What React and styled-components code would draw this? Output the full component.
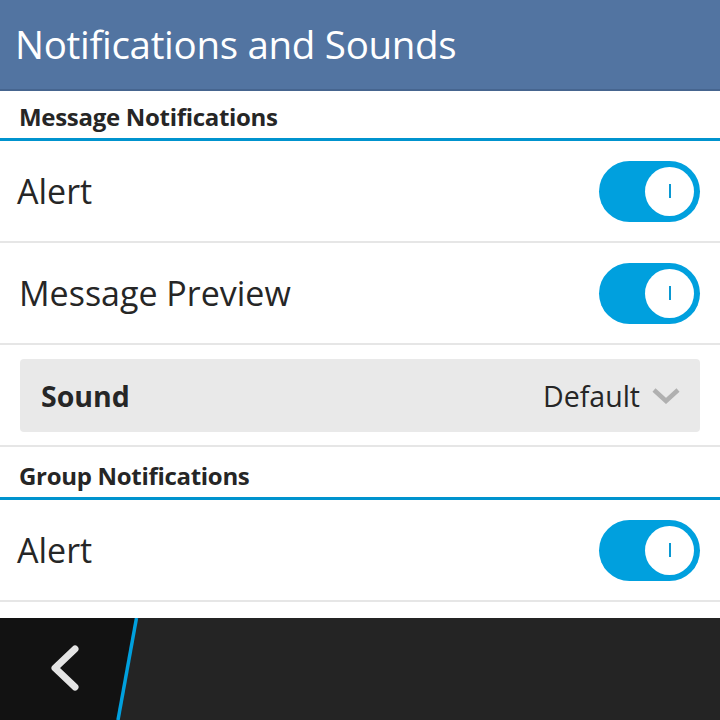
import React from "react";
import styled, { createGlobalStyle } from "styled-components";

const Global = createGlobalStyle`
  html, body { margin: 0; padding: 0; background: #fff; }
  body { width: 720px; height: 720px; overflow: hidden; font-family: "Open Sans", "Noto Sans", sans-serif; }
`;

const Screen = styled.div`
  width: 720px;
  height: 720px;
  display: flex;
  flex-direction: column;
  background: #fff;
  color: #262626;
`;

const Header = styled.header`
  height: 91px;
  flex: none;
  box-sizing: border-box;
  background: #5274a1;
  border-bottom: 2px solid #46658f;
  display: flex;
  align-items: center;
  padding-left: 15px;
`;

const Title = styled.h1`
  margin: 0;
  font-weight: 400;
  font-size: 38.5px;
  color: #fff;
  letter-spacing: -0.3px;
  padding-bottom: 1px;
`;

const Content = styled.main`
  flex: 1;
  display: flex;
  flex-direction: column;
`;

const SectionHeader = styled.div`
  height: ${(p) => p.$h + 3}px;
  flex: none;
  display: flex;
  align-items: flex-end;
  padding: 0 19px 5px;
  box-sizing: border-box;
  font-weight: 700;
  font-size: 24px;
  letter-spacing: -0.3px;
  border-bottom: 3px solid #0093ce;
`;

const Row = styled.div`
  height: 102px;
  flex: none;
  display: flex;
  align-items: center;
  justify-content: space-between;
  padding: 0 20px 0 17px;
  border-bottom: 2px solid #e6e6e6;
  box-sizing: border-box;
`;

const Label = styled.span`
  font-size: 34px;
  padding-left: ${(p) => p.$indent || 0}px;
`;

const Toggle = styled.div`
  width: 101px;
  height: 61px;
  border-radius: 31px;
  background: #00a0de;
  display: flex;
  align-items: center;
  justify-content: flex-end;
  padding-right: 6px;
  box-sizing: border-box;
`;

const Knob = styled.div`
  width: 49px;
  height: 49px;
  border-radius: 50%;
  background: #fff;
  display: flex;
  align-items: center;
  justify-content: center;
  &::after {
    content: "";
    width: 2px;
    height: 14px;
    background: #0a98d2;
  }
`;

const SoundRow = styled.div`
  height: 102px;
  flex: none;
  padding: 14px 20px 15px;
  box-sizing: border-box;
  border-bottom: 2px solid #e6e6e6;
`;

const Dropdown = styled.div`
  height: 73px;
  background: #e9e9e9;
  border-radius: 4px;
  display: flex;
  align-items: center;
  justify-content: space-between;
  padding: 0 20px 0 21px;
  box-sizing: border-box;
`;

const DropLabel = styled.span`
  font-weight: 700;
  font-size: 28.5px;
`;

const DropValue = styled.span`
  display: flex;
  align-items: center;
  gap: 12px;
  font-size: 28.5px;
`;

const Spacer = styled.div`
  flex: 1;
`;

const BottomBar = styled.nav`
  height: 102px;
  flex: none;
  background: #242424;
  position: relative;
  display: flex;
`;

const BackArea = styled.div`
  width: 138px;
  background: #121212;
  clip-path: polygon(0 0, 138px 0, 118px 100%, 0 100%);
  display: flex;
  align-items: center;
  padding-left: 47px;
  box-sizing: border-box;
`;

const Slash = styled.svg`
  position: absolute;
  left: 0;
  top: 0;
`;

function Switch() {
  return (
    <Toggle>
      <Knob />
    </Toggle>
  );
}

export default function App() {
  return (
    <>
      <Global />
      <Screen>
        <Header>
          <Title>Notifications and Sounds</Title>
        </Header>
        <Content>
          <SectionHeader $h={47}>Message Notifications</SectionHeader>
          <Row>
            <Label>Alert</Label>
            <Switch />
          </Row>
          <Row>
            <Label $indent={2}>Message Preview</Label>
            <Switch />
          </Row>
          <SoundRow>
            <Dropdown>
              <DropLabel>Sound</DropLabel>
              <DropValue>
                Default
                <svg width="28" height="16" viewBox="0 0 28 16">
                  <path d="M2 2 L14 13 L26 2" fill="none" stroke="#b0b0b0" strokeWidth="4.5" />
                </svg>
              </DropValue>
            </Dropdown>
          </SoundRow>
          <SectionHeader $h={50}>Group Notifications</SectionHeader>
          <Row>
            <Label>Alert</Label>
            <Switch />
          </Row>
          <Spacer />
        </Content>
        <BottomBar>
          <BackArea>
            <svg width="34" height="48" viewBox="0 0 34 48">
              <path d="M28 4 L8 23 L28 42" fill="none" stroke="#e4e4e4" strokeWidth="7" strokeLinecap="round" strokeLinejoin="round" />
            </svg>
          </BackArea>
          <Slash width="160" height="102" viewBox="0 0 160 102">
            <line x1="136.5" y1="0" x2="118" y2="102" stroke="#00a0de" strokeWidth="3.5" />
          </Slash>
        </BottomBar>
      </Screen>
    </>
  );
}
